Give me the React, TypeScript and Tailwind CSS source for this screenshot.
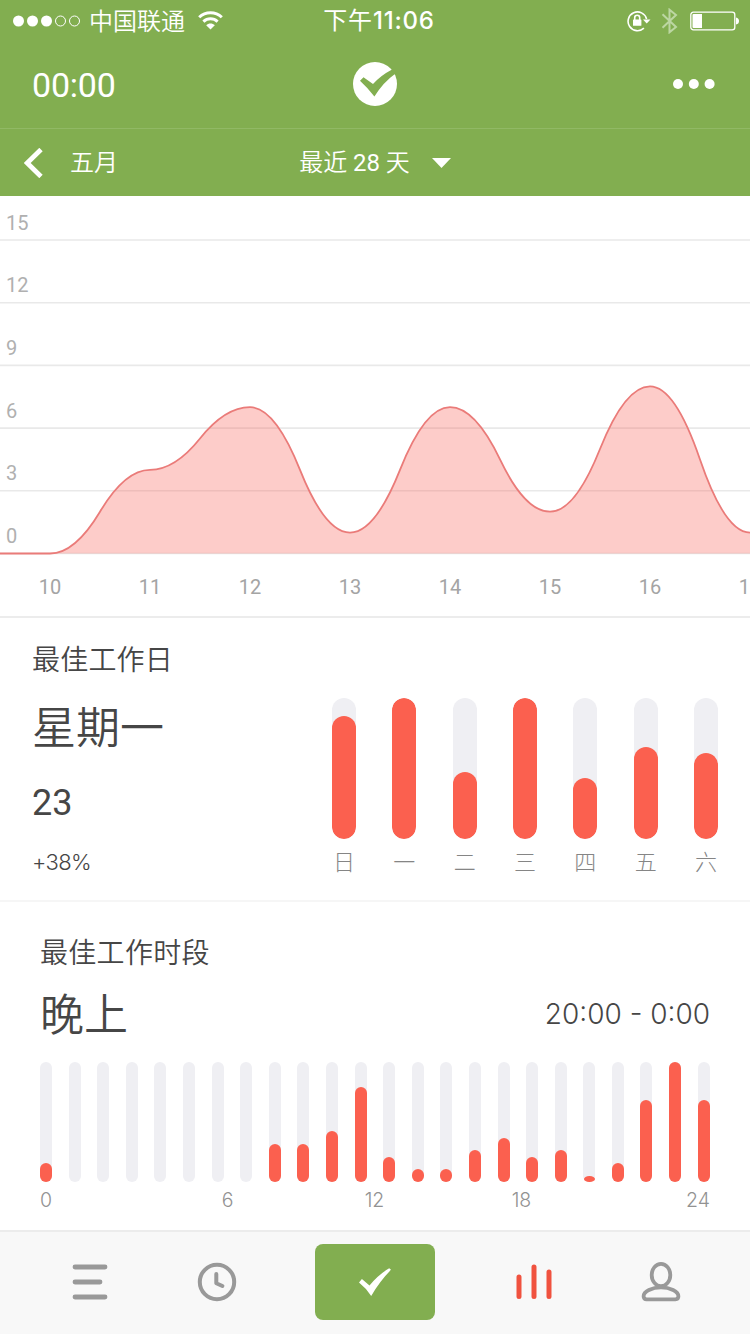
import type { ReactNode } from 'react';

const STEP = 100;
const UNIT = 20.9;
const BASE = 357.5;

const DAYS = [10, 11, 12, 13, 14, 15, 16, 17];
const POMODOROS = [0, 4, 7, 1, 7, 2, 8, 1];
const LEVELS = [15, 12, 9, 6, 3, 0];

const WEEK = [
  { label: '日', value: 20 },
  { label: '一', value: 23 },
  { label: '二', value: 11 },
  { label: '三', value: 23 },
  { label: '四', value: 10 },
  { label: '五', value: 15 },
  { label: '六', value: 14 },
];

const HOURS = [3, 0, 0, 0, 0, 0, 0, 0, 6, 6, 8, 15, 4, 2, 2, 5, 7, 4, 5, 1, 3, 13, 19, 13];

// every segment is two quadratics that meet halfway, flat at the data points
function buildCurve(values: number[]): string {
  let d = `M0 ${BASE} H50`;
  for (let i = 1; i < values.length; i++) {
    const x0 = 50 + (i - 1) * STEP;
    const y0 = BASE - values[i - 1] * UNIT;
    const y1 = BASE - values[i] * UNIT;
    d += ` Q${x0 + 25} ${y0} ${x0 + 50} ${(y0 + y1) / 2} Q${x0 + 75} ${y1} ${x0 + STEP} ${y1}`;
  }
  return d;
}

function StatusBar() {
  return (
    <div className="grid h-10 grid-cols-3 items-center pt-px pr-[10px] pl-[13px]">
      <div className="flex items-center">
        <svg width="68" height="12" viewBox="0 0 68 12" fill="#fff">
          <circle cx="5.5" cy="6" r="5.5" />
          <circle cx="19.5" cy="6" r="5.5" />
          <circle cx="33.5" cy="6" r="5.5" />
          <circle cx="47.5" cy="6" r="5" fill="none" stroke="#fff" />
          <circle cx="61.5" cy="6" r="5" fill="none" stroke="#fff" />
        </svg>
        <span className="ml-2 pt-0.5 text-2xl leading-9 font-[350]">中国联通</span>
        <svg className="ml-[13px]" width="25" height="19" viewBox="0 0 25 19" fill="none" stroke="#fff" strokeWidth="3">
          <path d="M1.2 6.3 C7.5 0.1 17.5 0.1 23.8 6.3" />
          <path d="M5.4 10.6 C9.5 6.8 15.5 6.8 19.6 10.6" />
          <path d="M12.5 18.5 L8.2 14.2 C10.6 12 14.4 12 16.8 14.2 Z" fill="#fff" stroke="none" />
        </svg>
      </div>
      <div className="pt-px pl-[5px] text-center font-['Inter','Noto_Sans_CJK_SC',sans-serif] text-2xl leading-9 font-medium tracking-[0.8px] whitespace-nowrap">
        <span className="font-normal">下午</span>11:06
      </div>
      <div className="flex items-center justify-end">
        <svg width="24" height="22" viewBox="0 0 24 22" fill="none" stroke="#fff" strokeWidth="1.6">
          <path d="M16.9 18.2 A9.4 9.4 0 1 1 19.6 9" />
          <path d="M16 9.5 H23.5 L19.7 13.5 Z" fill="#fff" stroke="none" />
          <rect x="6" y="9.5" width="8.4" height="6.3" rx="0.6" fill="#fff" stroke="none" />
          <path d="M7.7 10 V7.7 A2.5 2.5 0 0 1 12.7 7.7 V10" />
        </svg>
        <svg className="ml-[10px]" width="17" height="26" viewBox="0 0 17 26" fill="none" stroke="#bcd6a2" strokeWidth="2">
          <path d="M1.5 6.3 L15 19 L8.5 24.3 V1.7 L15 7 L1.5 19.7" />
        </svg>
        <svg className="ml-[12px]" width="50" height="20" viewBox="0 0 50 20" fill="none" stroke="#fff" strokeWidth="1.3">
          <rect x="0.8" y="1.2" width="44" height="17.6" rx="2.6" />
          <path d="M3.5 3 H12 V17 H3.5 Q2.5 17 2.5 16 V4 Q2.5 3 3.5 3 Z" fill="#fff" stroke="none" />
          <path d="M46 6.5 Q49 7 49 10 Q49 13 46 13.5 Z" fill="#fff" stroke="none" />
        </svg>
      </div>
    </div>
  );
}

function Header() {
  return (
    <header className="h-[196px] bg-[#82ae50] text-white">
      <StatusBar />
      <div className="grid h-[89px] grid-cols-3 items-center border-b border-[#91b965] px-8">
        <span className="pt-0.5 text-[34px] leading-10 tracking-[-0.2px]">00:00</span>
        <svg className="justify-self-center" width="44" height="44" viewBox="0 0 44 44">
          <circle cx="22" cy="22" r="22" fill="#fff" />
          <path d="M7 18.7 L10.5 15.2 L20 22 Q28 13.3 38.2 8 L45 5 V10 L42.3 11.8 Q30.5 20 21.4 34.6 Q14.5 25.5 7 18.7 Z" fill="#82ae50" />
        </svg>
        <svg className="mr-[3px] justify-self-end" width="42" height="10" viewBox="0 0 42 10" fill="#fff">
          <circle cx="5" cy="5" r="5" />
          <circle cx="20.8" cy="5" r="5" />
          <circle cx="36.6" cy="5" r="5" />
        </svg>
      </div>
      <div className="grid h-[67px] grid-cols-3 items-center px-6 text-2xl leading-10 font-[350]">
        <div className="flex items-center">
          <svg width="19" height="30" viewBox="0 0 19 30" fill="none" stroke="#fff" strokeWidth="4.8">
            <path d="M17 1.5 L3.2 15 L17 28.5" />
          </svg>
          <span className="ml-[27px]">五月</span>
        </div>
        <div className="flex items-center justify-center whitespace-nowrap">
          <span>
            最近 <span className="font-normal">28</span> 天
          </span>
          <svg className="ml-[22px]" width="19" height="10" viewBox="0 0 19 10" fill="#fff">
            <path d="M0 0 H19 L9.5 10 Z" />
          </svg>
        </div>
      </div>
    </header>
  );
}

function TrendChart() {
  const curve = buildCurve(POMODOROS);
  return (
    <section className="h-[422px] border-b-2 border-[#ececec]">
      <svg className="block" width="750" height="420" viewBox="0 0 750 420">
        {LEVELS.map((n) => (
          <g key={n}>
            <line x1="0" x2="750" y1={BASE - n * UNIT} y2={BASE - n * UNIT} stroke="#e9e9e9" strokeWidth="1.6" />
            <text x="6" y={BASE - n * UNIT - 10.5} fontSize="20" fill="#b0b0b0">
              {n}
            </text>
          </g>
        ))}
        <path d={`${curve} V${BASE} Z`} fill="#f75a50" fillOpacity="0.31" />
        <path d={curve} fill="none" stroke="#ea7b79" strokeWidth="1.8" />
        {DAYS.map((d, i) => (
          <text key={d} x={50 + i * STEP} y="398" textAnchor="middle" fontSize="20" fill="#a4a4a4">
            {d}
          </text>
        ))}
      </svg>
    </section>
  );
}

function BestDay() {
  return (
    <section className="flex h-[284px] justify-between border-b-2 border-[#f6f6f6] pr-8 pl-8 text-[#464646]">
      <div className="pt-[23px] font-[350]">
        <h2 className="text-[28px] leading-10 tracking-[0.2px]">最佳工作日</h2>
        <p className="mt-5 text-[44px] leading-[56px]">星期一</p>
        <p className="mt-[26px] text-4xl leading-10 font-normal">23</p>
        <p className="mt-6 font-['Inter',sans-serif] text-[22px] leading-[30px] tracking-[-0.6px]">+38%</p>
      </div>
      <div className="flex w-[386px] justify-between pt-20">
        {WEEK.map((day) => (
          <div key={day.label} className="w-6">
            <div className="flex h-[141px] items-end overflow-hidden rounded-full bg-[#efeff3]">
              <div className="w-full rounded-full bg-[#fb604f]" style={{ height: `${(day.value / 23) * 100}%` }} />
            </div>
            <div className="mt-[9px] text-center text-[22px] leading-[30px] font-light text-[#858585]">{day.label}</div>
          </div>
        ))}
      </div>
    </section>
  );
}

function BestHours() {
  return (
    <section className="h-[330px] border-b-2 border-[#ececec] px-10 pt-[31px] font-['Inter','Noto_Sans_CJK_SC',sans-serif] font-[350] text-[#464646]">
      <h2 className="text-[28px] leading-10 tracking-[0.3px]">最佳工作时段</h2>
      <div className="mt-3.5 flex items-center justify-between">
        <span className="text-[44px] leading-[56px]">晚上</span>
        <span className="pb-0.5 text-[28px] leading-10">20:00 - 0:00</span>
      </div>
      <div className="mt-[19px] flex justify-between">
        {HOURS.map((n, hour) => (
          <div key={hour} className="flex h-[120px] w-3 items-end justify-center rounded-full bg-[#efeff3]">
            <div
              className={`bg-[#fb604f] ${n > 1 ? 'w-full rounded-full' : 'w-[11px] rounded-[50%]'}`}
              style={{ height: `${(n / 19) * 100}%` }}
            />
          </div>
        ))}
      </div>
      <div className="mt-1 grid grid-cols-[114px_147px_147px_147px_115px] text-center text-[19.5px] leading-7 text-[#929292]">
        <span className="text-left">0</span>
        <span>6</span>
        <span>12</span>
        <span>18</span>
        <span className="text-right">24</span>
      </div>
    </section>
  );
}

function Tab({ children }: { children: ReactNode }) {
  return <button className="flex h-[100px] w-[127px] items-center justify-center">{children}</button>;
}

function TabBar() {
  return (
    <nav className="flex h-[102px] items-start bg-[#f8f8f8] pl-[26.5px]">
      <div className="flex">
        <Tab>
          <svg width="36" height="36" viewBox="0 0 36 36" stroke="#999" strokeWidth="4.8" strokeLinecap="round">
            <path d="M3 3 H33 M3 18 H28 M3 33 H33" />
          </svg>
        </Tab>
        <Tab>
          <svg width="40" height="40" viewBox="0 0 40 40" fill="none" stroke="#999" strokeWidth="4" strokeLinecap="round" strokeLinejoin="round">
            <circle cx="20" cy="20" r="17.2" />
            <path d="M19.3 12 V21.2 L25.4 24" />
          </svg>
        </Tab>
      </div>
      <button className="mt-3 ml-[34.5px] flex h-[76px] w-[120px] items-center justify-center rounded-lg bg-[#82ae50]">
        <svg width="32" height="28" viewBox="0 0 32 28" fill="#fff">
          <path d="M0 14.5 L2.9 11 L10.5 17.5 Q19 7 30.2 0.2 L32 1.8 Q20.5 13.5 12.2 28 Q7 20 0 14.5 Z" />
        </svg>
      </button>
      <div className="ml-[35.5px] flex">
        <Tab>
          <svg width="36" height="36" viewBox="0 0 36 36" stroke="#f0523f" strokeWidth="5" strokeLinecap="round">
            <path d="M3 13 V32.5 M18 3 V32.5 M33 8 V32.5" />
          </svg>
        </Tab>
        <Tab>
          <svg width="40" height="40" viewBox="0 0 40 40" fill="none" stroke="#999" strokeWidth="3.8">
            <ellipse cx="20" cy="13" rx="9.3" ry="11.1" />
            <path d="M20 25.4 C29 25.4 37.4 29.5 37.4 34.3 Q37.4 37.3 34.4 37.3 H5.6 Q2.6 37.3 2.6 34.3 C2.6 29.5 11 25.4 20 25.4 Z" />
          </svg>
        </Tab>
      </div>
    </nav>
  );
}

export default function App() {
  return (
    <div className="h-[1334px] w-[750px] overflow-hidden bg-white font-['Roboto','Noto_Sans_CJK_SC',sans-serif]">
      <Header />
      <TrendChart />
      <BestDay />
      <BestHours />
      <TabBar />
    </div>
  );
}
